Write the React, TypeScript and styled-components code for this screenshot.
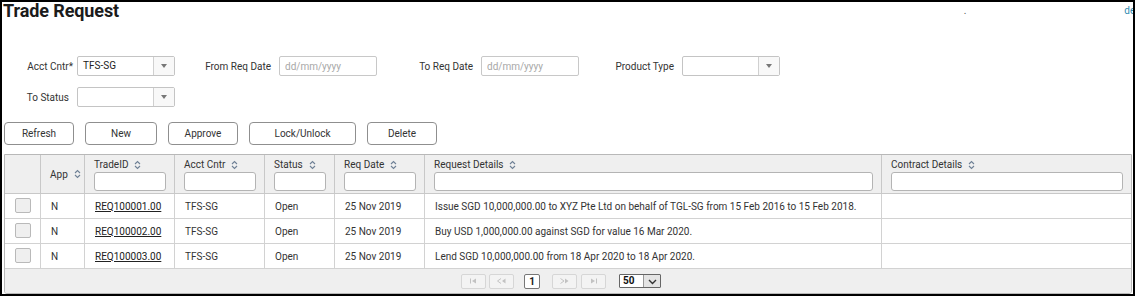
import React from "react";
import styled, { createGlobalStyle } from "styled-components";

const FONT = `Roboto, "Liberation Sans", Arial, sans-serif`;

const GlobalStyle = createGlobalStyle`
  html, body { margin: 0; padding: 0; background: #fff; }
  body { font-family: ${FONT}; color: #333; font-size: 10px; }
  * { box-sizing: border-box; }
`;

const Frame = styled.div`
  width: 1135px;
  height: 296px;
  border: 2px solid #000;
  overflow: hidden;
  background: #fff;
  display: flex;
  flex-direction: column;
`;

const TopBar = styled.div`
  display: flex;
  align-items: flex-start;
  height: 18px;
  padding-left: 1px;
`;

const Title = styled.h1`
  margin: 0;
  font-size: 18px;
  line-height: 18px;
  font-weight: 700;
  color: #1b1b1b;
  letter-spacing: -0.1px;
`;

const Dot = styled.span`
  margin-left: auto;
  margin-top: 3px;
  font-size: 10px;
  line-height: 11px;
  color: #555;
`;

const DevLink = styled.a`
  margin-left: 158px;
  margin-right: -7px;
  margin-top: 3px;
  font-size: 10px;
  line-height: 12px;
  color: #2f8bb0;
  text-decoration: none;
`;

const Form = styled.div`
  margin-top: 36px;
  display: flex;
  flex-direction: column;
  gap: 11px;
`;

const FormRow = styled.div`
  display: flex;
  align-items: center;
  height: 20px;
`;

const Label = styled.label<{ $w: number }>`
  width: ${(p) => p.$w}px;
  margin-right: 8px;
  text-align: right;
  font-size: 10px;
  color: #333;
  white-space: nowrap;
`;

const Req = styled.span`
  margin-right: -4px;
`;

const SelectBox = styled.div`
  width: 98px;
  height: 20px;
  border: 1px solid #c4c4c4;
  border-radius: 2px;
  display: flex;
  background: #fff;
`;

const SelectValue = styled.span`
  flex: 1;
  padding-left: 5px;
  line-height: 18px;
  font-size: 10px;
  color: #222;
`;

const SelectArrow = styled.span`
  width: 21px;
  border-left: 1px solid #d0d0d0;
  background: #f8f8f8;
  display: flex;
  align-items: center;
  justify-content: center;
  &::after {
    content: "";
    border-left: 3.5px solid transparent;
    border-right: 3.5px solid transparent;
    border-top: 4px solid #777;
  }
`;

const DateInput = styled.input`
  width: 98px;
  height: 20px;
  border: 1px solid #c8c8c8;
  border-radius: 2px;
  padding: 0 5px;
  font-family: ${FONT};
  font-size: 10px;
  color: #333;
  outline: none;
  &::placeholder { color: #a8a8a8; }
`;

const Toolbar = styled.div`
  margin-top: 15px;
  margin-left: 2px;
  display: flex;
  gap: 11px;
`;

const Button = styled.button<{ $w: number }>`
  width: ${(p) => p.$w}px;
  height: 23px;
  border: 1px solid #8f8f8f;
  border-radius: 4px;
  background: #fff;
  font-family: ${FONT};
  font-size: 10px;
  color: #333;
  padding: 0;
`;

const Grid = styled.div`
  margin-top: 9px;
  margin-left: 2px;
  width: 1128px;
  border: 1px solid #b8b8b8;
  border-radius: 0 0 3px 3px;
  overflow: hidden;
  display: grid;
  grid-template-columns: 36px 44px 90px 90px 70px 90px 457px 249px;
  grid-template-rows: 39px repeat(3, 25px) 24px;
  flex-shrink: 0;
`;

const HeadCell = styled.div<{ $center?: boolean; $last?: boolean }>`
  background: #efefef;
  border-right: ${(p) => (p.$last ? "none" : "1px solid #c8c8c8")};
  border-bottom: 1px solid #c8c8c8;
  padding: ${(p) => (p.$center ? "0 0 0 9px" : "3px 8px 0 9px")};
  display: flex;
  flex-direction: column;
  justify-content: ${(p) => (p.$center ? "center" : "flex-start")};
`;

const HeadLabel = styled.div`
  display: flex;
  align-items: center;
  gap: 6px;
  font-size: 10px;
  line-height: 13px;
  color: #333;
  white-space: nowrap;
`;

const FilterInput = styled.input`
  margin-top: 1px;
  width: 100%;
  height: 19px;
  border: 1px solid #b4b4b4;
  border-radius: 3px;
  background: #fff;
  outline: none;
`;

const Cell = styled.div<{ $last?: boolean; $center?: boolean }>`
  border-right: ${(p) => (p.$last ? "none" : "1px solid #d2d2d2")};
  border-bottom: 1px solid #d2d2d2;
  display: flex;
  align-items: center;
  justify-content: ${(p) => (p.$center ? "center" : "flex-start")};
  padding-left: ${(p) => (p.$center ? 0 : 10)}px;
  font-size: 10px;
  color: #333;
  white-space: nowrap;
  overflow: hidden;
`;

const Link = styled.span`
  text-decoration: underline;
  color: #222;
`;

const Checkbox = styled.span`
  width: 16px;
  height: 15px;
  margin-top: -2px;
  border: 1px solid #b9b9b9;
  border-radius: 2px;
  background: #efefef;
`;

const Footer = styled.div`
  grid-column: 1 / -1;
  background: #efefef;
  display: flex;
  align-items: center;
  justify-content: center;
  padding-right: 14px;
`;

const PagerBtn = styled.span<{ $ml?: number }>`
  width: 25px;
  height: 15px;
  margin-left: ${(p) => p.$ml ?? 0}px;
  border: 1px solid #d6d6d6;
  border-radius: 2px;
  background: #f3f3f3;
  display: flex;
  align-items: center;
  justify-content: center;
`;

const PageNum = styled.span`
  width: 16px;
  height: 15px;
  margin-left: 10px;
  border: 1px solid #777;
  border-radius: 2px;
  background: #fff;
  font-size: 10px;
  font-weight: 700;
  line-height: 13px;
  text-align: center;
  color: #222;
`;

const PageSize = styled.span`
  margin-left: 13px;
  width: 42px;
  height: 14px;
  display: flex;
  border: 1px solid #666;
  border-radius: 1px;
  background: #fff;
`;

const PageSizeValue = styled.span`
  flex: 1;
  padding-left: 3px;
  font-size: 10px;
  font-weight: 700;
  line-height: 12px;
  color: #111;
`;

const PageSizeArrow = styled.span`
  width: 17px;
  background: #e4e4e4;
  border-left: 1px solid #999;
  display: flex;
  align-items: flex-end;
  justify-content: center;
  padding-bottom: 2px;
`;

const SortIcon = () => (
  <svg width="7" height="10" viewBox="0 0 7 10" fill="none">
    <path d="M1 4 L3.5 1.5 L6 4" stroke="#6f8196" strokeWidth="1.1" />
    <path d="M1 6 L3.5 8.5 L6 6" stroke="#6f8196" strokeWidth="1.1" />
  </svg>
);

const PagerIcon = ({ kind }: { kind: "first" | "prev" | "next" | "last" }) => {
  const c = "#c2c2c2";
  return (
    <svg width="9" height="6" viewBox="0 0 9 6">
      {kind === "first" && (
        <>
          <rect x="1" y="0.5" width="1" height="5" fill={c} />
          <path d="M7 0.5 L3 3 L7 5.5 Z" fill={c} />
        </>
      )}
      {kind === "prev" && (
        <>
          <path d="M4 0.5 L0.5 3 L4 5.5" stroke={c} fill="none" />
          <path d="M8.5 0.5 L5 3 L8.5 5.5 Z" fill={c} />
        </>
      )}
      {kind === "next" && (
        <>
          <path d="M0.5 0.5 L4 3 L0.5 5.5" stroke={c} fill="none" />
          <path d="M5 0.5 L8.5 3 L5 5.5 Z" fill={c} />
        </>
      )}
      {kind === "last" && (
        <>
          <path d="M2 0.5 L6 3 L2 5.5 Z" fill={c} />
          <rect x="7" y="0.5" width="1" height="5" fill={c} />
        </>
      )}
    </svg>
  );
};

const Chevron = () => (
  <svg width="9" height="6" viewBox="0 0 9 6" fill="none">
    <path d="M1 1 L4.5 4.5 L8 1" stroke="#333" strokeWidth="1.4" />
  </svg>
);

const columns = [
  { key: "chk", label: "", filter: false },
  { key: "app", label: "App", filter: false, sort: true },
  { key: "id", label: "TradeID", filter: true, sort: true },
  { key: "acct", label: "Acct Cntr", filter: true, sort: true },
  { key: "status", label: "Status", filter: true, sort: true },
  { key: "date", label: "Req Date", filter: true, sort: true },
  { key: "req", label: "Request Details", filter: true, sort: true },
  { key: "contract", label: "Contract Details", filter: true, sort: true },
];

const rows = [
  {
    id: "REQ100001.00",
    details:
      "Issue SGD 10,000,000.00 to XYZ Pte Ltd on behalf of TGL-SG from 15 Feb 2016 to 15 Feb 2018.",
  },
  { id: "REQ100002.00", details: "Buy USD 1,000,000.00 against SGD for value 16 Mar 2020." },
  { id: "REQ100003.00", details: "Lend SGD 10,000,000.00 from 18 Apr 2020 to 18 Apr 2020." },
];

export default function App() {
  return (
    <>
      <GlobalStyle />
      <Frame>
        <TopBar>
          <Title>Trade Request</Title>
          <Dot>.</Dot>
          <DevLink>dev</DevLink>
        </TopBar>

        <Form>
          <FormRow>
            <Label $w={67}>
              Acct Cntr<Req>*</Req>
            </Label>
            <SelectBox>
              <SelectValue>TFS-SG</SelectValue>
              <SelectArrow />
            </SelectBox>
            <Label $w={96}>From Req Date</Label>
            <DateInput placeholder="dd/mm/yyyy" />
            <Label $w={96}>To Req Date</Label>
            <DateInput placeholder="dd/mm/yyyy" />
            <Label $w={95}>Product Type</Label>
            <SelectBox>
              <SelectValue />
              <SelectArrow />
            </SelectBox>
          </FormRow>
          <FormRow>
            <Label $w={67}>To Status</Label>
            <SelectBox>
              <SelectValue />
              <SelectArrow />
            </SelectBox>
          </FormRow>
        </Form>

        <Toolbar>
          <Button $w={70}>Refresh</Button>
          <Button $w={72}>New</Button>
          <Button $w={70}>Approve</Button>
          <Button $w={107}>Lock/Unlock</Button>
          <Button $w={70}>Delete</Button>
        </Toolbar>

        <Grid>
          {columns.map((c, i) => (
            <HeadCell key={c.key} $center={!c.filter} $last={i === columns.length - 1}>
              {c.label && (
                <HeadLabel>
                  {c.label}
                  {c.sort && <SortIcon />}
                </HeadLabel>
              )}
              {c.filter && <FilterInput />}
            </HeadCell>
          ))}
          {rows.map((r) => (
            <React.Fragment key={r.id}>
              <Cell $center>
                <Checkbox />
              </Cell>
              <Cell>N</Cell>
              <Cell>
                <Link>{r.id}</Link>
              </Cell>
              <Cell>TFS-SG</Cell>
              <Cell>Open</Cell>
              <Cell>25 Nov 2019</Cell>
              <Cell>{r.details}</Cell>
              <Cell $last />
            </React.Fragment>
          ))}
          <Footer>
            <PagerBtn>
              <PagerIcon kind="first" />
            </PagerBtn>
            <PagerBtn $ml={3}>
              <PagerIcon kind="prev" />
            </PagerBtn>
            <PageNum>1</PageNum>
            <PagerBtn $ml={12}>
              <PagerIcon kind="next" />
            </PagerBtn>
            <PagerBtn $ml={4}>
              <PagerIcon kind="last" />
            </PagerBtn>
            <PageSize>
              <PageSizeValue>50</PageSizeValue>
              <PageSizeArrow>
                <Chevron />
              </PageSizeArrow>
            </PageSize>
          </Footer>
        </Grid>
      </Frame>
    </>
  );
}
